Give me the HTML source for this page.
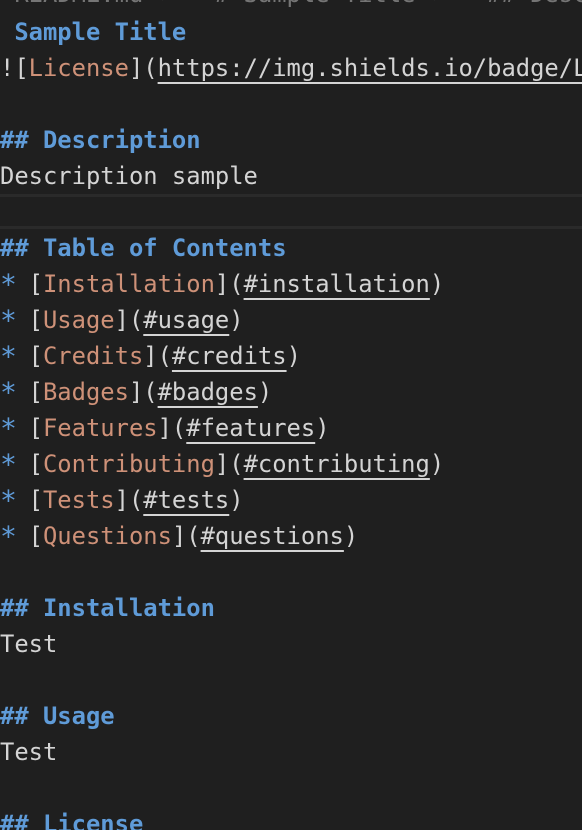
<!DOCTYPE html>
<html><head><style>
html,body{margin:0;width:582px;height:830px;overflow:hidden}
body{background:#1f1f1f;position:relative;font-family:"DejaVu Sans Mono","Liberation Mono",monospace;font-size:23.8px;color:#d4d4d4;}
.r{position:absolute;left:0;width:582px;overflow:hidden;height:36px;line-height:36px;white-space:pre;}
.h{color:#5f9bd8;font-weight:bold}
.b{color:#ce9178}
.u{text-decoration:underline;text-underline-offset:6px;text-decoration-thickness:2px}
.s{color:#5f9bd8;font-size:28px;display:inline-block;width:14.33px;overflow:visible;vertical-align:-2px;line-height:0}
.sep{position:absolute;left:0;width:582px;height:3px;background:#2a2a2a}
</style></head><body>
<div class="r" style="top:-24px;color:#9a9a9a;opacity:.7"> README.md › ▭ # Sample Title › ▭ ## Desc</div>
<div class="r h" style="top:14px"> Sample Title</div>
<div class="r" style="top:50px">![<span class="b">License</span>](<span class="u">https://img.shields.io/badge/License</span></div>
<div class="r h" style="top:122px">## Description</div>
<div class="r" style="top:158px">Description sample</div>
<div class="sep" style="top:194px"></div>
<div class="sep" style="top:226px"></div>
<div class="r h" style="top:230px">## Table of Contents</div>
<div class="r" style="top:266px"><span class="s">*</span> [<span class="b">Installation</span>](<span class="u">#installation</span>)</div>
<div class="r" style="top:302px"><span class="s">*</span> [<span class="b">Usage</span>](<span class="u">#usage</span>)</div>
<div class="r" style="top:338px"><span class="s">*</span> [<span class="b">Credits</span>](<span class="u">#credits</span>)</div>
<div class="r" style="top:374px"><span class="s">*</span> [<span class="b">Badges</span>](<span class="u">#badges</span>)</div>
<div class="r" style="top:410px"><span class="s">*</span> [<span class="b">Features</span>](<span class="u">#features</span>)</div>
<div class="r" style="top:446px"><span class="s">*</span> [<span class="b">Contributing</span>](<span class="u">#contributing</span>)</div>
<div class="r" style="top:482px"><span class="s">*</span> [<span class="b">Tests</span>](<span class="u">#tests</span>)</div>
<div class="r" style="top:518px"><span class="s">*</span> [<span class="b">Questions</span>](<span class="u">#questions</span>)</div>
<div class="r h" style="top:590px">## Installation</div>
<div class="r" style="top:626px">Test</div>
<div class="r h" style="top:698px">## Usage</div>
<div class="r" style="top:734px">Test</div>
<div class="r h" style="top:806px">## License</div>
</body></html>
